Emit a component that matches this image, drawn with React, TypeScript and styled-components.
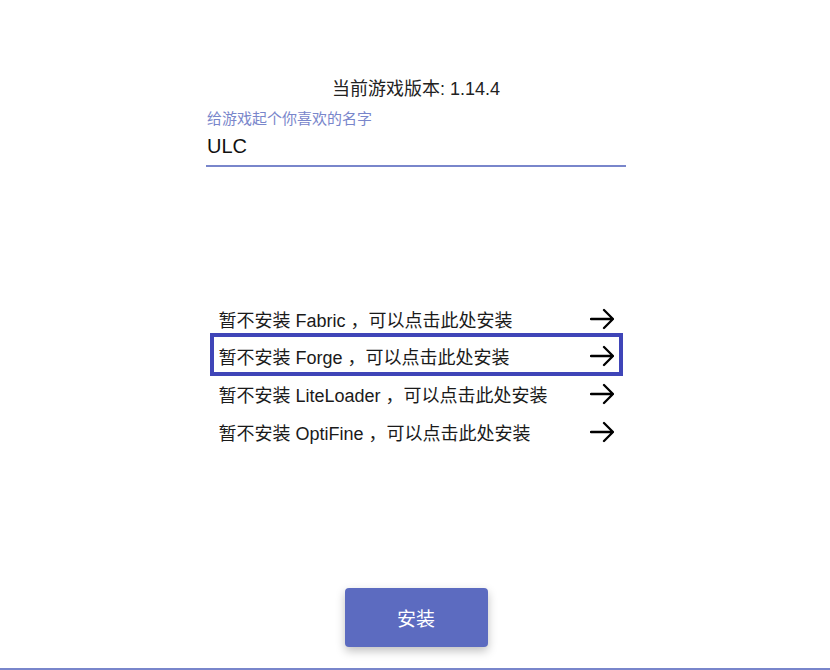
import React from 'react'
import styled, {createGlobalStyle} from 'styled-components'

const GlobalStyle = createGlobalStyle`
  html, body {
    margin: 0;
    padding: 0;
    background: #fff;
  }
  body {
    font-family: "Liberation Sans", "Noto Sans CJK SC", sans-serif;
    color: #1a1a1a;
  }
`

const Page = styled.main`
  height: 670px;
  display: flex;
  flex-direction: column;
  align-items: center;
  box-sizing: border-box;
  border-bottom: 2px solid #7986cb;
`

const Title = styled.h1`
  margin: 77px 0 0 2px;
  font-size: 18px;
  line-height: 24px;
  font-weight: 400;
  color: #222;
`

const Field = styled.label`
  width: 420px;
  margin-top: 8px;
  margin-left: 2px;
  display: flex;
  flex-direction: column;
`

const FieldLabel = styled.span`
  font-size: 15px;
  line-height: 20px;
  color: #7986cb;
  padding-left: 1px;
`

const NameInput = styled.input`
  border: none;
  border-bottom: 2px solid #7986cb;
  outline: none;
  padding: 3px 0 5px 1px;
  font-family: "Liberation Sans", "Noto Sans CJK SC", sans-serif;
  font-size: 20px;
  line-height: 28px;
  color: #111;
  caret-color: #111;
`

const Options = styled.ul`
  list-style: none;
  margin: 133px 0 0 2px;
  padding: 0;
  width: 413px;
  display: flex;
  flex-direction: column;
`

const Option = styled.li<{$focused?: boolean}>`
  box-sizing: border-box;
  display: flex;
  align-items: center;
  justify-content: space-between;
  height: ${p => (p.$focused ? '43px' : '38px')};
  margin: ${p => (p.$focused ? '-5px 0 -1px' : '0')};
  padding: ${p => (p.$focused ? '3px 5px 0 5px' : '0 9px 0 9px')};
  border: ${p => (p.$focused ? '4px solid #3f45b8' : 'none')};
  font-size: 18px;
  color: #1a1a1a;
  cursor: pointer;
`

const Spacer = styled.div`
  flex: 1;
`

const InstallButton = styled.button`
  width: 143px;
  height: 59px;
  margin: 0 0 21px 2px;
  border: none;
  border-radius: 4px;
  background: #5c6bc0;
  color: #fff;
  font-family: "Liberation Sans", "Noto Sans CJK SC", sans-serif;
  font-size: 19px;
  box-shadow: 0 4px 10px rgba(0, 0, 0, 0.25);
  cursor: pointer;
`

const Arrow = () => (
  <svg width="24" height="24" viewBox="0 0 24 24" fill="none" stroke="#000" strokeWidth="2.3" strokeLinecap="round" strokeLinejoin="round">
    <path d="M1 12H23M14 3L23 12L14 21" />
  </svg>
)

const mods = ['Fabric', 'Forge', 'LiteLoader', 'OptiFine']

const App = () => (
  <>
    <GlobalStyle />
    <Page>
      <Title>当前游戏版本: 1.14.4</Title>
      <Field>
        <FieldLabel>给游戏起个你喜欢的名字</FieldLabel>
        <NameInput defaultValue="ULC" autoFocus />
      </Field>
      <Options>
        {mods.map(m => (
          <Option key={m} $focused={m === 'Forge'}>
            <span>暂不安装 {m} ，可以点击此处安装</span>
            <Arrow />
          </Option>
        ))}
      </Options>
      <Spacer />
      <InstallButton>安装</InstallButton>
    </Page>
  </>
)

export default App
